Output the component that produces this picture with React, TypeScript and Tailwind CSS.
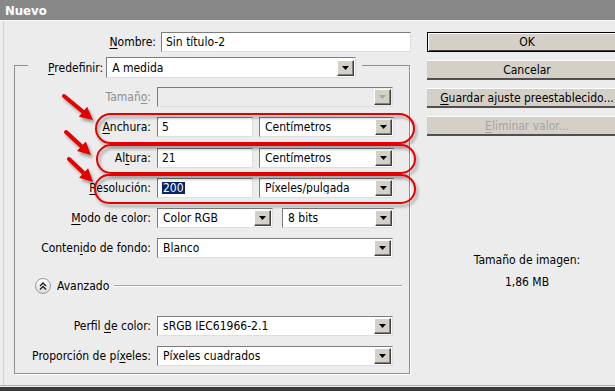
import React from 'react'

function U({ children }: { children: React.ReactNode }) {
  return <span className="underline underline-offset-2">{children}</span>
}

function DropButton({ disabled }: { disabled?: boolean }) {
  return (
    <span className="flex h-[16px] w-[17px] shrink-0 items-center justify-center border border-t-white border-l-white border-b-[#404040] border-r-[#404040] bg-[#d4d0c8] shadow-[inset_-1px_-1px_0_#808080]">
      <svg width="7" height="4" viewBox="0 0 7 4">
        <path d="M0 0h7L3.5 4z" fill={disabled ? '#a8a8a8' : '#000'} />
      </svg>
    </span>
  )
}

function Select({ value, className, disabled }: { value?: string; className: string; disabled?: boolean }) {
  return (
    <div
      className={`flex h-[20px] shrink-0 items-center justify-between border border-t-[#7c7c7c] border-l-[#7c7c7c] border-b-[#dedede] border-r-[#dedede] pl-[5px] pr-[1px] ${
        disabled ? 'bg-[#ececec]' : 'bg-white'
      } ${className}`}
    >
      <span className="truncate">{value}</span>
      <DropButton disabled={disabled} />
    </div>
  )
}

function Input({ children, className }: { children: React.ReactNode; className: string }) {
  return (
    <div
      className={`flex h-[20px] shrink-0 items-center border border-t-[#7c7c7c] border-l-[#7c7c7c] border-b-[#dedede] border-r-[#dedede] bg-white pl-[4px] ${className}`}
    >
      {children}
    </div>
  )
}

function Row({ label, children, className = 'mt-[10px]', muted }: { label: React.ReactNode; children: React.ReactNode; className?: string; muted?: boolean }) {
  return (
    <div className={`flex h-[20px] items-center gap-[6px] ${className}`}>
      <div className={`w-[136px] shrink-0 text-right ${muted ? 'text-[#8e8e8e]' : ''}`}>{label}</div>
      {children}
    </div>
  )
}

function Button({ children, primary, disabled }: { children: React.ReactNode; primary?: boolean; disabled?: boolean }) {
  return (
    <div
      className={`flex h-[20px] w-[200px] items-center justify-center bg-[#d4d0c8] ${
        primary
          ? 'border border-black shadow-[inset_1px_1px_0_#fff,inset_-1px_-1px_0_#404040]'
          : 'border-b-2 border-b-[#505050] border-t border-t-white shadow-[inset_-1px_0_0_#808080]'
      } ${disabled ? 'text-[#a4a4a4]' : ''}`}
    >
      {children}
    </div>
  )
}

function Arrow({ x1, y1, x2, y2 }: { x1: number; y1: number; x2: number; y2: number }) {
  const len = Math.hypot(x2 - x1, y2 - y1)
  const dx = (x2 - x1) / len
  const dy = (y2 - y1) / len
  const bx = x2 - dx * 13
  const by = y2 - dy * 13
  const px = -dy * 6.5
  const py = dx * 6.5
  return (
    <g filter="url(#shadow)">
      <line x1={x1} y1={y1} x2={bx} y2={by} stroke="#e30000" strokeWidth="4" strokeLinecap="round" />
      <path d={`M${x2} ${y2}L${bx + px} ${by + py}L${bx - px} ${by - py}Z`} fill="#e30000" />
    </g>
  )
}

export default function App() {
  return (
    <div className="relative flex h-[391px] w-[615px] flex-col overflow-hidden bg-[#ececec] font-['DejaVu_Sans_Condensed','DejaVu_Sans',sans-serif] text-[12px] leading-none text-black">
      <div className="flex h-[21px] shrink-0 items-center border-b border-b-[#f6f6f6] bg-[#888888] pl-[5px] text-[13px] font-bold text-white">
        Nuevo
      </div>

      <div className="flex flex-1 pl-[3px]">
        <div className="flex flex-1 border-l border-l-[#d2d2d2]">
          {/* left side */}
          <div className="flex w-[420px] shrink-0 flex-col">
            <div className="mt-[11px] flex items-center gap-[5px]">
              <div className="w-[152px] text-right">
                <U>N</U>ombre:
              </div>
              <Input className="w-[250px]">Sin título-2</Input>
            </div>

            <fieldset className="ml-[10px] mt-0 w-[396px] border border-[#8f8f8f] pb-[7px] shadow-[1px_1px_0_#fff]">
              <legend className="ml-[13px] pr-[6px] pl-[20px] pt-[5px]">
                <div className="flex items-center gap-[3px]">
                  <span>
                    <U>P</U>redefinir:
                  </span>
                  <Select value="A medida" className="h-[21px] w-[250px]" />
                </div>
              </legend>

              <Row label={<>Tamañ<U>o</U>:</>} muted className="mt-[9px]">
                <Select className="w-[236px]" disabled />
              </Row>
              <Row label={<><U>A</U>nchura:</>}>
                <Input className="w-[96px]">5</Input>
                <Select value="Centímetros" className="w-[135px]" />
              </Row>
              <Row label={<>Al<U>t</U>ura:</>} className="mt-[11px]">
                <Input className="w-[96px]">21</Input>
                <Select value="Centímetros" className="w-[135px]" />
              </Row>
              <Row label={<><U>R</U>esolución:</>}>
                <Input className="w-[96px]">
                  <span className="bg-[#0a246a] px-[1px] text-white">200</span>
                </Input>
                <Select value="Píxeles/pulgada" className="w-[135px]" />
              </Row>
              <Row label={<><U>M</U>odo de color:</>}>
                <Select value="Color RGB" className="w-[116px]" />
                <Select value="8 bits" className="ml-[3px] w-[112px]" />
              </Row>
              <Row label={<>Conten<U>i</U>do de fondo:</>}>
                <Select value="Blanco" className="w-[236px]" />
              </Row>

              <div className="ml-[20px] mr-[7px] mt-[20px] flex h-[16px] items-center">
                <span className="flex h-[16px] w-[16px] items-center justify-center rounded-full border border-[#9a9a9a] bg-gradient-to-b from-white to-[#dcdcdc]">
                  <svg width="8" height="8" viewBox="0 0 8 8">
                    <path d="M1 4l3-3 3 3M1 7.5l3-3 3 3" fill="none" stroke="#222" strokeWidth="1.4" />
                  </svg>
                </span>
                <span className="ml-[6px]">Avanzado</span>
                <span className="ml-[5px] h-[2px] flex-1 border-t border-t-[#a6a6a6] border-b border-b-white" />
              </div>

              <Row label={<>Perfil <U>d</U>e color:</>} className="mt-[22px]">
                <Select value="sRGB IEC61966-2.1" className="w-[236px]" />
              </Row>
              <Row label={<>Proporción de pí<U>x</U>eles:</>}>
                <Select value="Píxeles cuadrados" className="w-[236px]" />
              </Row>
            </fieldset>
          </div>

          {/* right side */}
          <div className="ml-[3px] flex w-[200px] shrink-0 flex-col items-center">
            <div className="mt-[11px] flex flex-col gap-[8px]">
              <Button primary>OK</Button>
              <Button>Cancelar</Button>
              <Button>
                <span>
                  <U>G</U>uardar ajuste preestablecido...
                </span>
              </Button>
              <Button disabled>
                <span>
                  <U>E</U>liminar valor...
                </span>
              </Button>
            </div>
            <div className="mt-[118px]">Tamaño de imagen:</div>
            <div className="mt-[10px]">1,86 MB</div>
          </div>
        </div>
      </div>

      <div className="h-[6px] shrink-0 border-t border-t-[#b4b4b4] bg-[#3c3c3c] shadow-[inset_0_1px_0_#e8e8e8]" />

      <svg className="pointer-events-none absolute inset-0" width="615" height="391">
        <defs>
          <filter id="shadow" x="-20%" y="-20%" width="140%" height="160%">
            <feDropShadow dx="2" dy="3" stdDeviation="1.5" floodColor="#000" floodOpacity="0.35" />
          </filter>
        </defs>
        <g fill="none" stroke="#e30000" strokeWidth="2" filter="url(#shadow)">
          <rect x="96" y="114" width="318" height="29" rx="14.5" />
          <rect x="97" y="145" width="318" height="28" rx="14" />
          <rect x="95" y="175" width="320" height="28" rx="14" />
        </g>
        <Arrow x1={64} y1={96} x2={93} y2={120} />
        <Arrow x1={66} y1={132} x2={91} y2={155} />
        <Arrow x1={69} y1={159} x2={93} y2={182} />
      </svg>
    </div>
  )
}
